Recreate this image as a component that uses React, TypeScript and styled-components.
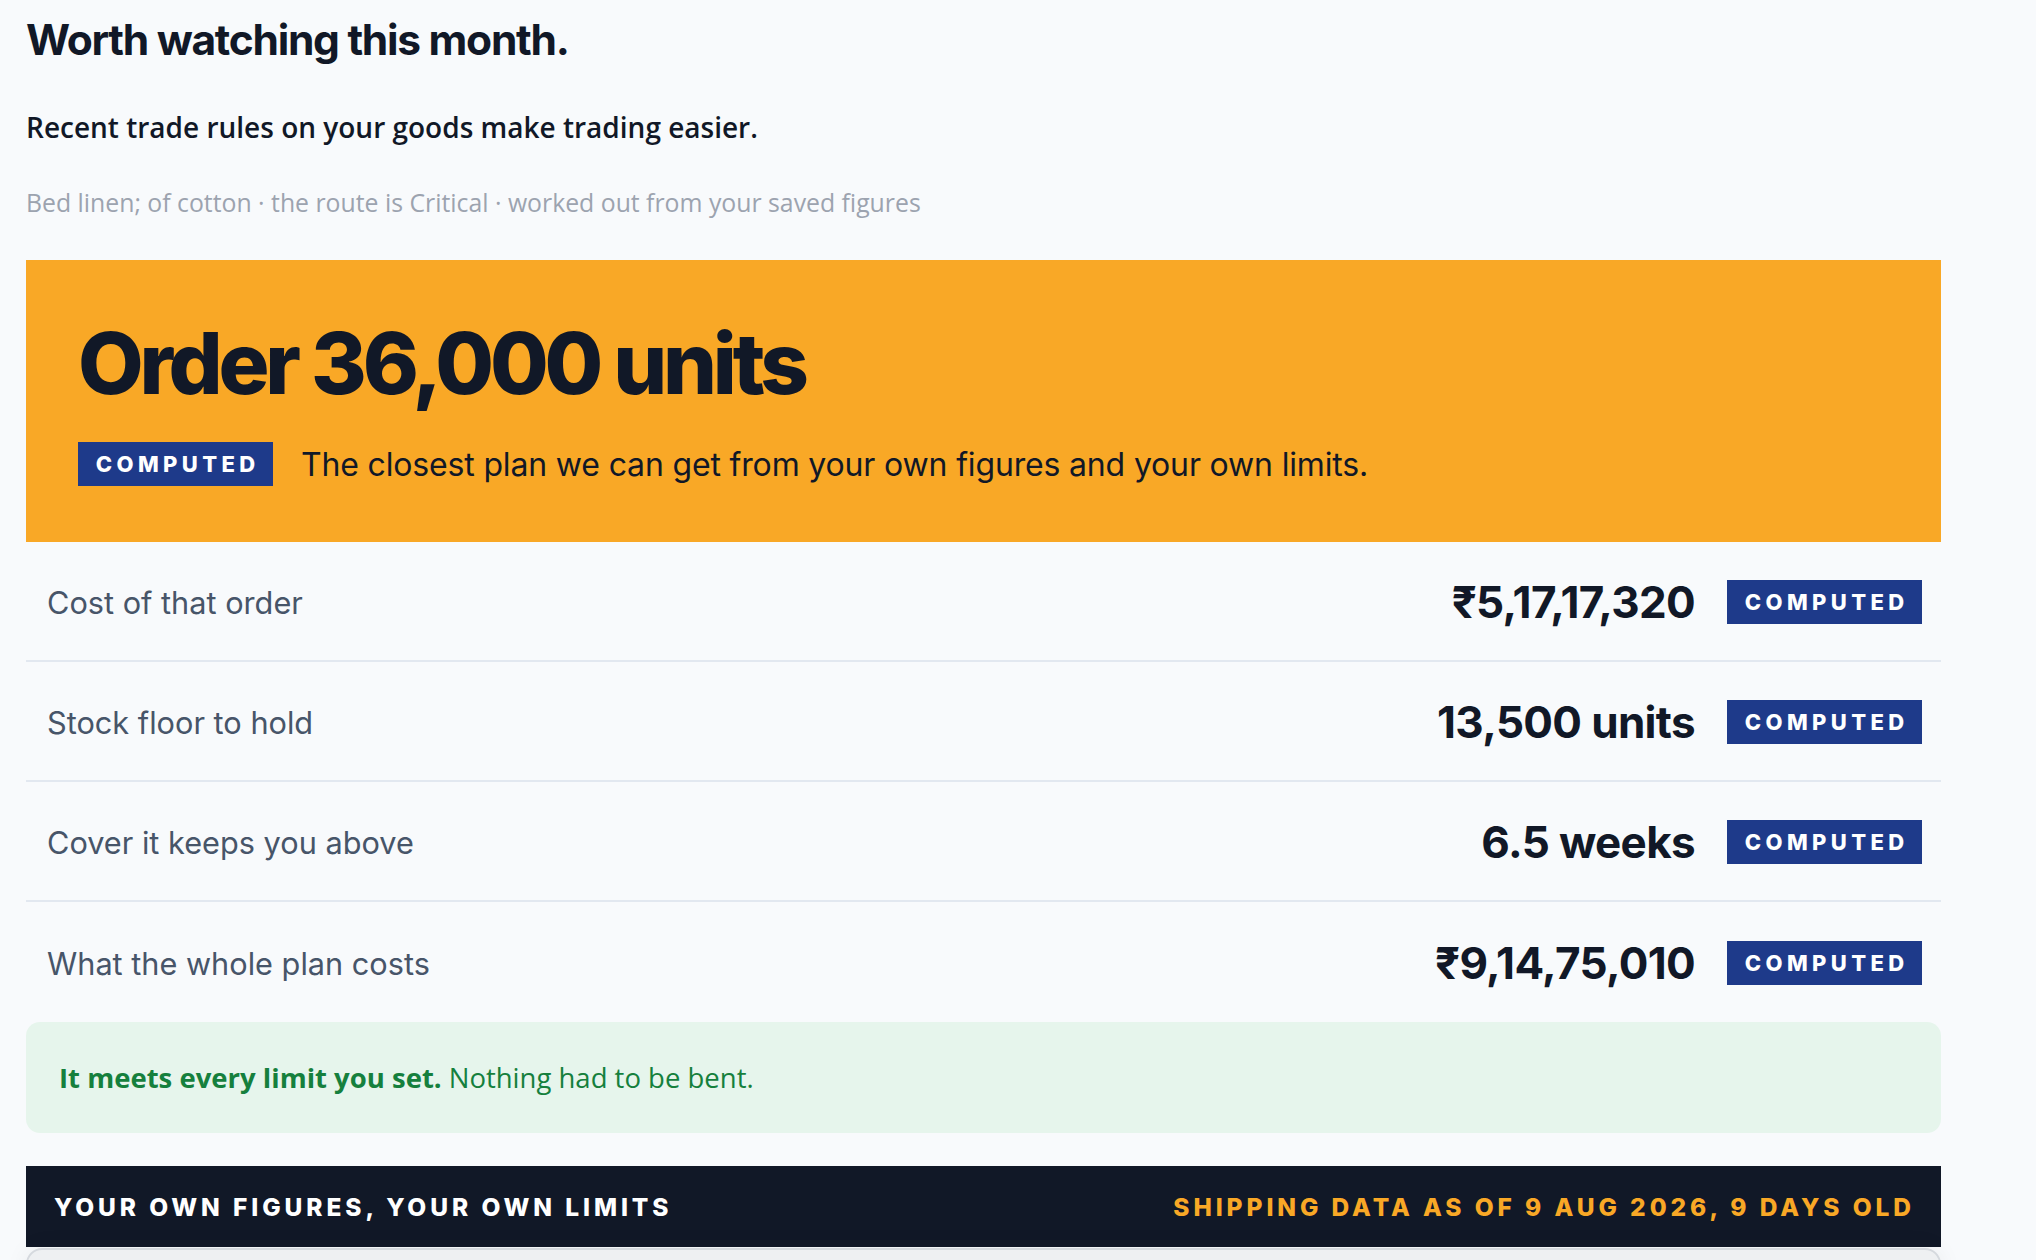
import React from 'react';
import styled, { createGlobalStyle } from 'styled-components';

const GlobalStyle = createGlobalStyle`
  html, body {
    margin: 0;
    padding: 0;
    background: #f8fafc;
  }
  body {
    font-family: Inter, "Noto Sans", sans-serif;
    color: #111827;
  }
`;

const Page = styled.div`
  width: 1915px;
  padding: 14px 0 0 26px;
  display: flex;
  flex-direction: column;
`;

const Heading = styled.h1`
  margin: 0;
  font-family: Inter, sans-serif;
  font-size: 42.5px;
  line-height: 1.24;
  font-weight: 700;
  letter-spacing: -0.03em;
  color: #111827;
`;

const Lead = styled.p`
  margin: 44px 0 0;
  font-family: "Open Sans", "Noto Sans", sans-serif;
  font-size: 28px;
  line-height: 1.2;
  font-weight: 600;
  color: #111827;
`;

const Meta = styled.p`
  margin: 44px 0 42px;
  font-family: "Open Sans", "Noto Sans", sans-serif;
  font-size: 24.8px;
  line-height: 1.2;
  color: #9ca3af;
`;

const Hero = styled.section`
  background: #f9a826;
  padding: 61px 52px 56px;
  display: flex;
  flex-direction: column;
  gap: 36px;
`;

const HeroTitle = styled.h2`
  margin: 0;
  font-family: Inter, sans-serif;
  font-size: 85px;
  line-height: 1;
  font-weight: 800;
  letter-spacing: -0.05em;
  color: #111827;
`;

const HeroNote = styled.div`
  display: flex;
  align-items: center;
  gap: 28px;
  font-size: 32px;
  letter-spacing: -0.005em;
  color: #111827;
`;

const Badge = styled.span`
  display: inline-flex;
  align-items: center;
  justify-content: center;
  width: 195px;
  height: 44px;
  box-sizing: border-box;
  background: #1e3a8a;
  color: #ffffff;
  font-family: Inter, sans-serif;
  font-size: 22px;
  font-weight: 800;
  letter-spacing: 0.2em;
  padding-left: 0.2em;
  flex-shrink: 0;
`;

const Rows = styled.div`
  display: flex;
  flex-direction: column;
`;

const Row = styled.div`
  display: flex;
  align-items: center;
  min-height: 120px;
  padding: 2px 19px 0 21px;
  box-sizing: border-box;
  border-bottom: 2px solid #e2e8f0;

  &:last-child {
    border-bottom: none;
  }
`;

const Label = styled.span`
  flex: 1;
  font-size: 30.7px;
  color: #475569;
`;

const Value = styled.span`
  font-size: 44px;
  font-weight: 700;
  letter-spacing: -0.015em;
  color: #111827;
  margin-right: 32px;
`;

const Verdict = styled.div`
  background: #e6f5ec;
  border-radius: 14px;
  padding: 0 33px;
  height: 111px;
  display: flex;
  align-items: center;
  font-family: "Open Sans", "Noto Sans", sans-serif;
  font-size: 27.5px;
  color: #15803d;

  strong {
    font-weight: 700;
    margin-right: 7px;
  }
`;

const SourceBar = styled.div`
  margin-top: 33px;
  height: 81px;
  background: #111827;
  display: flex;
  align-items: center;
  justify-content: space-between;
  padding: 0 26px 0 28px;
  font-size: 24.5px;
  font-weight: 800;
  letter-spacing: 0.16em;
`;

const SourceTitle = styled.span`
  color: #ffffff;
`;

const SourceAge = styled.span`
  color: #f9a826;
`;

const InputsCard = styled.div`
  height: 160px;
  margin-top: 1px;
  background: #eef0f2;
  border: 2px solid #d5d9de;
  border-radius: 16px;
  box-shadow: 0 0 24px rgba(15, 23, 42, 0.06);
`;

type Figure = { label: string; value: string };

const figures: Figure[] = [
  { label: 'Cost of that order', value: '₹5,17,17,320' },
  { label: 'Stock floor to hold', value: '13,500 units' },
  { label: 'Cover it keeps you above', value: '6.5 weeks' },
  { label: 'What the whole plan costs', value: '₹9,14,75,010' },
];

export default function App() {
  return (
    <>
      <GlobalStyle />
      <Page>
        <Heading>Worth watching this month.</Heading>
        <Lead>Recent trade rules on your goods make trading easier.</Lead>
        <Meta>
          Bed linen; of cotton · the route is Critical · worked out from your saved figures
        </Meta>

        <Hero>
          <HeroTitle>Order 36,000 units</HeroTitle>
          <HeroNote>
            <Badge>COMPUTED</Badge>
            The closest plan we can get from your own figures and your own limits.
          </HeroNote>
        </Hero>

        <Rows>
          {figures.map((f) => (
            <Row key={f.label}>
              <Label>{f.label}</Label>
              <Value>{f.value}</Value>
              <Badge>COMPUTED</Badge>
            </Row>
          ))}
        </Rows>

        <Verdict>
          <strong>It meets every limit you set.</strong> Nothing had to be bent.
        </Verdict>

        <SourceBar>
          <SourceTitle>YOUR OWN FIGURES, YOUR OWN LIMITS</SourceTitle>
          <SourceAge>SHIPPING DATA AS OF 9 AUG 2026, 9 DAYS OLD</SourceAge>
        </SourceBar>
        <InputsCard />
      </Page>
    </>
  );
}
